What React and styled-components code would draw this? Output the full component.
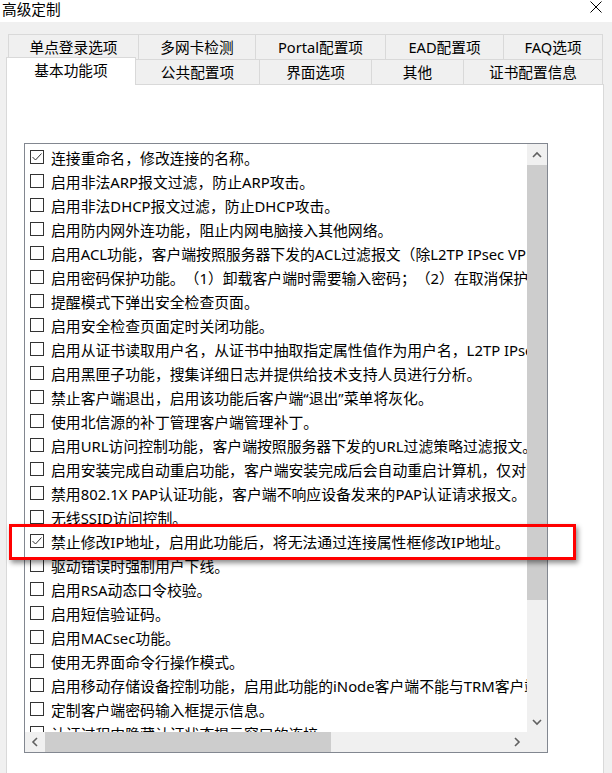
import React from "react";
import styled, { createGlobalStyle } from "styled-components";

const GlobalStyle = createGlobalStyle`
  body {
    margin: 0;
    background: #f0f0f0;
    font-family: "Noto Sans", "Noto Sans CJK SC", sans-serif;
    color: #000;
    text-spacing-trim: space-all;
  }
`;

const Window = styled.div`
  position: relative;
  width: 612px;
  height: 773px;
  overflow: hidden;
  display: flex;
  flex-direction: column;
  background: #f0f0f0;
`;

const TitleBar = styled.div`
  height: 22px;
  flex: none;
  background: #fff;
  display: flex;
  align-items: flex-start;
  justify-content: space-between;
  padding: 0 10px 0 2px;
  font-size: 14.67px;
  line-height: 18px;
`;

const CloseIcon = styled.svg`
  margin-top: 1px;
`;

const Body = styled.div`
  flex: 1;
  display: flex;
  flex-direction: column;
  padding: 12px 8px 0 6px;
`;

const TabRow = styled.div`
  display: flex;
  align-items: flex-end;
  height: 25px;
  padding-left: ${(p) => p.$indent}px;
`;

const Tab = styled.div`
  box-sizing: border-box;
  width: ${(p) => p.$w}px;
  height: ${(p) => (p.$active ? 28 : 25)}px;
  margin-left: -1px;
  margin-bottom: ${(p) => (p.$active ? -1 : 0)}px;
  border: 1px solid #d9d9d9;
  border-bottom: none;
  background: ${(p) => (p.$active ? "#fff" : "#f0f0f0")};
  position: relative;
  z-index: ${(p) => (p.$active ? 2 : 1)};
  display: flex;
  align-items: center;
  justify-content: center;
  padding-bottom: ${(p) => (p.$active ? 4 : 1)}px;
  font-size: 14.67px;
  white-space: nowrap;

  &:first-child {
    margin-left: 0;
  }
`;

const Panel = styled.div`
  flex: 1;
  background: #fff;
  border: 1px solid #d9d9d9;
  border-bottom: none;
  padding: 58px 0 0 17px;
`;

const ListBox = styled.div`
  box-sizing: border-box;
  width: 524px;
  height: 610px;
  border: 1px solid #828790;
  display: grid;
  grid-template-columns: 1fr 20px;
  grid-template-rows: 1fr 20px;
`;

const Items = styled.div`
  overflow: hidden;
  padding: 1px 0 0 5px;
  background: #fff;
`;

const Row = styled.div`
  height: 24px;
  display: flex;
  align-items: center;
  gap: 7px;
  white-space: nowrap;
  font-size: 14.85px;
`;

const Box = styled.span`
  box-sizing: border-box;
  flex: none;
  width: 14px;
  height: 14px;
  border: 1px solid #333;
  background: #fff;
  display: flex;
  align-items: center;
  justify-content: center;
`;

const VScroll = styled.div`
  background: #f0f0f0;
  display: flex;
  flex-direction: column;
`;

const HScroll = styled.div`
  background: #f0f0f0;
  display: flex;
`;

const Corner = styled.div`
  background: #f0f0f0;
`;

const ArrowBtn = styled.div`
  flex: none;
  width: 20px;
  height: ${(p) => (p.$h ? p.$h : 20)}px;
  display: flex;
  align-items: center;
  justify-content: center;
`;

const Thumb = styled.div`
  background: #cdcdcd;
  flex: none;
  ${(p) => (p.$vertical ? `height: ${p.$size}px;` : `width: ${p.$size}px;`)}
`;

const Track = styled.div`
  flex: 1;
`;

const Highlight = styled.div`
  position: absolute;
  left: 9px;
  top: 524px;
  width: 567px;
  height: 36px;
  box-sizing: border-box;
  border: 3px solid #ff0000;
  box-shadow: 2px 3px 5px rgba(0, 0, 0, 0.45);
  pointer-events: none;
`;

const Chevron = ({ dir }) => {
  const pts = {
    up: "1,6 5,2 9,6",
    down: "1,2 5,6 9,2",
    left: "6,1 2,5 6,9",
    right: "2,1 6,5 2,9",
  }[dir];
  const vertical = dir === "up" || dir === "down";
  return (
    <svg width={vertical ? 10 : 8} height={vertical ? 8 : 10} viewBox={vertical ? "0 0 10 8" : "0 0 8 10"}>
      <polyline points={pts} fill="none" stroke="#606060" strokeWidth="1.6" />
    </svg>
  );
};

const Check = () => (
  <svg width="12" height="12" viewBox="0 0 12 12">
    <polyline points="1.5,6 4.5,9 10.5,2.5" fill="none" stroke="#333" strokeWidth="1" />
  </svg>
);

const topTabs = [
  { label: "单点登录选项", w: 131 },
  { label: "多网卡检测", w: 118 },
  { label: "Portal配置项", w: 131 },
  { label: "EAD配置项", w: 119 },
  { label: "FAQ选项", w: 100 },
];

const bottomTabs = [
  { label: "基本功能项", w: 130, active: true },
  { label: "公共配置项", w: 125 },
  { label: "界面选项", w: 113 },
  { label: "其他", w: 93 },
  { label: "证书配置信息", w: 140 },
];

const options = [
  { text: "连接重命名，修改连接的名称。", checked: true },
  { text: "启用非法ARP报文过滤，防止ARP攻击。" },
  { text: "启用非法DHCP报文过滤，防止DHCP攻击。" },
  { text: "启用防内网外连功能，阻止内网电脑接入其他网络。" },
  { text: "启用ACL功能，客户端按照服务器下发的ACL过滤报文（除L2TP IPsec VPN连接）。" },
  { text: "启用密码保护功能。（1）卸载客户端时需要输入密码；（2）在取消保护后才能退出。" },
  { text: "提醒模式下弹出安全检查页面。" },
  { text: "启用安全检查页面定时关闭功能。" },
  { text: "启用从证书读取用户名，从证书中抽取指定属性值作为用户名，L2TP IPsec VPN除外。" },
  { text: "启用黑匣子功能，搜集详细日志并提供给技术支持人员进行分析。" },
  { text: "禁止客户端退出，启用该功能后客户端“退出”菜单将灰化。" },
  { text: "使用北信源的补丁管理客户端管理补丁。" },
  { text: "启用URL访问控制功能，客户端按照服务器下发的URL过滤策略过滤报文。" },
  { text: "启用安装完成自动重启功能，客户端安装完成后会自动重启计算机，仅对安装有效。" },
  { text: "禁用802.1X PAP认证功能，客户端不响应设备发来的PAP认证请求报文。" },
  { text: "无线SSID访问控制。" },
  { text: "禁止修改IP地址，启用此功能后，将无法通过连接属性框修改IP地址。", checked: true },
  { text: "驱动错误时强制用户下线。" },
  { text: "启用RSA动态口令校验。" },
  { text: "启用短信验证码。" },
  { text: "启用MACsec功能。" },
  { text: "使用无界面命令行操作模式。" },
  { text: "启用移动存储设备控制功能，启用此功能的iNode客户端不能与TRM客户端同时使用。" },
  { text: "定制客户端密码输入框提示信息。" },
  { text: "认证过程中隐藏认证状态提示窗口的连接。" },
];

export default function App() {
  return (
    <Window>
      <GlobalStyle />
      <TitleBar>
        <span>高级定制</span>
        <CloseIcon width="12" height="12" viewBox="0 0 12 12">
          <path d="M0.5 0.5 L11.5 11.5 M11.5 0.5 L0.5 11.5" stroke="#000" strokeWidth="1" />
        </CloseIcon>
      </TitleBar>
      <Body>
        <TabRow $indent={2}>
          {topTabs.map((t) => (
            <Tab key={t.label} $w={t.w}>
              {t.label}
            </Tab>
          ))}
        </TabRow>
        <TabRow $indent={0}>
          {bottomTabs.map((t) => (
            <Tab key={t.label} $w={t.w} $active={t.active}>
              {t.label}
            </Tab>
          ))}
        </TabRow>
        <Panel>
          <ListBox>
            <Items>
              {options.map((o) => (
                <Row key={o.text}>
                  <Box>{o.checked && <Check />}</Box>
                  <span>{o.text}</span>
                </Row>
              ))}
            </Items>
            <VScroll>
              <ArrowBtn $h={21}>
                <Chevron dir="up" />
              </ArrowBtn>
              <Thumb $vertical $size={435} />
              <Track />
              <ArrowBtn>
                <Chevron dir="down" />
              </ArrowBtn>
            </VScroll>
            <HScroll>
              <ArrowBtn>
                <Chevron dir="left" />
              </ArrowBtn>
              <Thumb $size={286} />
              <Track />
              <ArrowBtn>
                <Chevron dir="right" />
              </ArrowBtn>
            </HScroll>
            <Corner />
          </ListBox>
        </Panel>
      </Body>
      <Highlight />
    </Window>
  );
}
